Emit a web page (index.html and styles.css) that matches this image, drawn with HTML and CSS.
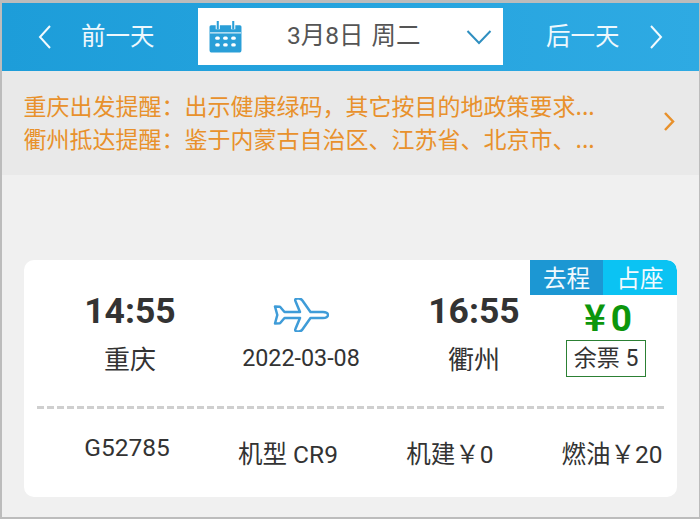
FILE: index.html
```html
<!DOCTYPE html>
<html lang="zh-CN">
<head>
<meta charset="utf-8">
<title>航班</title>
<link rel="stylesheet" href="styles.css">
</head>
<body>
<div class="frame">
  <header class="nav">
    <div class="nav-side nav-prev">
      <svg class="chev" viewBox="0 0 16 26"><path d="M13 2 3 13l10 11"/></svg>
      <span>前一天</span>
    </div>
    <div class="date-box">
      <svg class="cal" viewBox="0 0 32 32">
        <path class="cal-body" d="M2 5h28a1.500 1.500 0 0 1 1.500 1.500V29a2.500 2.500 0 0 1-2.500 2.500H3A2.500 2.500 0 0 1 .5 29V6.500A1.500 1.500 0 0 1 2 5z"/>
        <path class="cal-line" d="M1 12.500h30"/>
        <path class="cal-halo" d="M8.500 1v8M23.500 1v8"/>
        <path class="cal-ring" d="M8.500 1v8M23.500 1v8"/>
        <g class="cal-dots">
          <rect x="6" y="16" width="4.500" height="3.200" rx="1.500"/><rect x="13.700" y="16" width="4.500" height="3.200" rx="1.500"/><rect x="21.500" y="16" width="4.500" height="3.200" rx="1.500"/>
          <rect x="6" y="22.500" width="4.500" height="3.200" rx="1.500"/><rect x="13.700" y="22.500" width="4.500" height="3.200" rx="1.500"/><rect x="21.500" y="22.500" width="4.500" height="3.200" rx="1.500"/>
        </g>
      </svg>
      <span class="date-text">3月8日 周二</span>
      <svg class="down" viewBox="0 0 26 16"><path d="M1.500 2 13 14 24.500 2"/></svg>
    </div>
    <div class="nav-side nav-next">
      <span>后一天</span>
      <svg class="chev" viewBox="0 0 16 26"><path d="M3 2l10 11L3 24"/></svg>
    </div>
  </header>

  <section class="notice">
    <div class="notice-text">
      <p class="notice-line">重庆出发提醒&#xFF1A;出示健康绿码&#xFF0C;其它按目的地政策要求...</p>
      <p class="notice-line">衢州抵达提醒&#xFF1A;鉴于内蒙古自治区、江苏省、北京市、...</p>
    </div>
    <svg class="notice-arrow" viewBox="0 0 12 21"><path d="M2 2l8 8.500-8 8.500"/></svg>
  </section>

  <main class="content">
    <article class="card">
      <div class="tags"><span class="tag tag-go">去程</span><span class="tag tag-seat">占座</span></div>
      <div class="route">
        <div class="stop">
          <div class="time">14:55</div>
          <div class="city">重庆</div>
        </div>
        <div class="mid">
          <svg class="plane" viewBox="0 0 56 34"><path d="M2 8.500l5 .2 4.500 5.300H27L22.500 3.200c-.8-1.700.2-2.700 1.800-2.700h1.500c1.500 0 2.700.8 3.600 2L37.500 14H50c3 0 5 1.400 5 3s-2 3-5 3H37.500l-8.100 11.500c-.9 1.300-2.100 2-3.600 2h-1.500c-1.600 0-2.600-1-1.800-2.700L27 20H11.500L7 25.300l-5 .2 2.300-8.500z"/></svg>
          <div class="flight-date">2022-03-08</div>
        </div>
        <div class="stop">
          <div class="time">16:55</div>
          <div class="city">衢州</div>
        </div>
        <div class="fare">
          <div class="price"><span class="yen">¥</span>0</div>
          <div class="left">余票 5</div>
        </div>
      </div>
      <div class="dash"></div>
      <div class="meta">
        <span class="meta-no">G52785</span>
        <span>机型 CR9</span>
        <span>机建&#xFFE5;0</span>
        <span>燃油&#xFFE5;20</span>
      </div>
    </article>
  </main>
</div>
</body>
</html>
```

FILE: styles.css
```css
* { box-sizing: border-box; }
html, body { margin: 0; padding: 0; }
body {
  width: 700px;
  height: 519px;
  overflow: hidden;
  font-family: Roboto, "Noto Sans CJK SC", sans-serif;
  background: #f0f0f0;
}
.frame {
  width: 700px;
  height: 519px;
  display: flex;
  flex-direction: column;
  border-style: solid;
  border-color: #bcbcbc;
  border-width: 3px 1px 2px 2px;
  background: #f0f0f0;
}
.nav {
  height: 68px;
  flex: none;
  display: flex;
  align-items: center;
  background: linear-gradient(90deg, #1d9dd9 0%, #2eaae3 100%);
  color: #fff;
}
.nav-side {
  display: flex;
  align-items: center;
  font-size: 24.500px;
  line-height: 1;
  color: #eef8fd;
}
.nav-prev { width: 196px; padding-left: 35px; gap: 28px; }
.nav-next { flex: 1; padding-left: 43px; gap: 28px; }
.chev { width: 16px; height: 26px; flex: none; }
.chev path { fill: none; stroke: #f2fafe; stroke-width: 2; }
.date-box {
  width: 305px;
  height: 57px;
  margin-top: -1px;
  background: #fff;
  display: flex;
  align-items: center;
  padding: 0 11px;
  flex: none;
}
.cal { width: 33px; height: 33px; flex: none; }
.cal-body { fill: #2a9fd8; }
.cal-line { stroke: #fff; stroke-width: 1; fill: none; }
.cal-halo { stroke: #fff; stroke-width: 4; fill: none; }
.cal-ring { stroke: #2a9fd8; stroke-width: 2; fill: none; }
.cal-dots rect { fill: #fff; }
.date-text {
  flex: 1;
  padding-left: 45px;
  font-size: 24.500px;
  word-spacing: 2px;
  line-height: 1;
  color: #555;
  white-space: nowrap;
}
.down { width: 26px; height: 16px; flex: none; }
.down path { fill: none; stroke: #2f8fc0; stroke-width: 2; }

.notice {
  height: 104px;
  flex: none;
  display: flex;
  align-items: center;
  padding: 0 24px 2px 21.500px;
  background: #e9e9e9;
}
.notice-text { flex: 1; min-width: 0; }
.notice-line {
  margin: 0;
  font-family: "Noto Sans CJK SC", sans-serif;
  font-size: 23px;
  line-height: 33px;
  color: #e8912c;
  white-space: nowrap;
}
.notice-arrow { width: 12px; height: 21px; flex: none; margin-bottom: 2px; }
.notice-arrow path { fill: none; stroke: #e8912c; stroke-width: 2.500; }

.content { flex: 1; padding: 85px 22px 20px 22px; }
.card {
  position: relative;
  height: 237px;
  border-radius: 10px;
  background: #fff;
  overflow: hidden;
  color: #333;
}
.tags {
  position: absolute;
  top: 0;
  right: 0;
  display: flex;
  height: 35px;
  color: #f2fafe;
  font-family: "Noto Sans CJK SC", sans-serif;
  font-size: 23.500px;
  line-height: 35px;
}
.tag { display: block; text-align: center; }
.tag-go { width: 73px; background: #1c97d3; }
.tag-seat { width: 74px; background: #0bc3f3; border-top-right-radius: 10px; }

.route {
  display: grid;
  grid-template-columns: 212px 130px 216px 48px;
  padding-top: 28px;
  height: 146px;
}
.stop, .mid, .fare { display: flex; flex-direction: column; align-items: center; }
.time {
  margin-top: 1px;
  font-size: 35.500px;
  line-height: 44px;
  font-weight: 700;
  white-space: nowrap;
}
.city {
  margin-top: 6px;
  font-family: "Noto Sans CJK SC", sans-serif;
  font-size: 26px;
  line-height: 38px;
}
.mid { padding-top: 10px; }
.plane { width: 56px; height: 34px; flex: none; }
.plane path { fill: #fff; stroke: #3f9cd8; stroke-width: 2.500; stroke-linejoin: round; }
.flight-date {
  margin-top: 11px;
  font-size: 23.300px;
  line-height: 30px;
  white-space: nowrap;
}
.price {
  margin-top: 5px;
  padding-left: 4px;
  font-size: 37px;
  line-height: 44px;
  font-weight: 700;
  color: #0c960c;
  white-space: nowrap;
}
.yen { font-family: "Noto Sans CJK SC", sans-serif; margin-right: 5px; }
.left {
  margin-top: -1px;
  width: 80px;
  flex: none;
  border: 1px solid #2c8034;
  font-size: 23px;
  line-height: 35px;
  height: 37px;
  text-align: center;
  white-space: nowrap;
  color: #333;
}
.dash {
  margin: 0 12px 0 13px;
  height: 3px;
  background: repeating-linear-gradient(90deg, #cfcfcf 0 7px, transparent 7px 10px);
}
.meta {
  display: grid;
  grid-template-columns: 206px 116px 208px 116px;
  font-size: 24.500px;
  line-height: 32px;
  padding-top: 30px;
  white-space: nowrap;
}
.meta > span { text-align: center; }
.meta-no { margin-top: -7px; }
```
